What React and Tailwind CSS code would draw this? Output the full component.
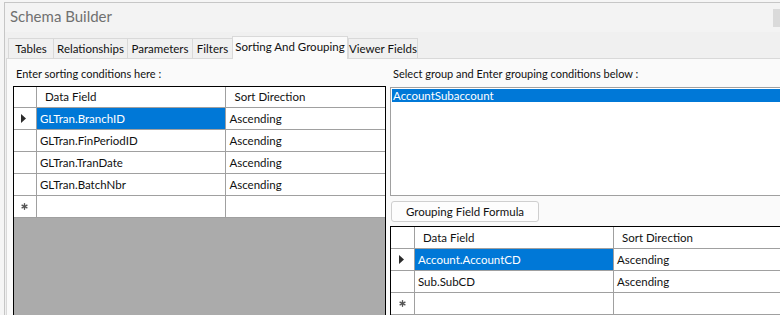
import React from 'react';

const tabs = [
  { label: 'Tables', w: 'w-[45px]' },
  { label: 'Relationships', w: 'w-[74px]' },
  { label: 'Parameters', w: 'w-[65px]' },
  { label: 'Filters', w: 'w-[40px]' },
  { label: 'Sorting And Grouping', w: 'w-[116px]', active: true },
  { label: 'Viewer Fields', w: 'w-[70px]' },
];

const sortRows = [
  { field: 'GLTran.BranchID', dir: 'Ascending', selected: true },
  { field: 'GLTran.FinPeriodID', dir: 'Ascending' },
  { field: 'GLTran.TranDate', dir: 'Ascending' },
  { field: 'GLTran.BatchNbr', dir: 'Ascending' },
];

const groupRows = [
  { field: 'Account.AccountCD', dir: 'Ascending', selected: true },
  { field: 'Sub.SubCD', dir: 'Ascending' },
];

const RowArrow = () => (
  <svg width="5" height="9" viewBox="0 0 5 9">
    <polygon points="0,0 5,4.5 0,9" fill="#2b2b2b" />
  </svg>
);

const NewRowMark = () => (
  <svg width="7" height="7" viewBox="0 0 7 7">
    <g stroke="#555" strokeWidth="1.4" strokeLinecap="round">
      <line x1="3.5" y1="0.8" x2="3.5" y2="6.2" />
      <line x1="1" y1="2.2" x2="6" y2="4.8" />
      <line x1="1" y1="4.8" x2="6" y2="2.2" />
    </g>
  </svg>
);

// one data grid: row header column + Data Field + Sort Direction
const DataGrid = ({ rows, hdrW, fieldW, dirW, headerH, className }) => (
  <div className={`flex flex-col bg-[#ababab] border-t border-l border-black ${className}`}>
    <div className={`flex ${headerH} bg-white border-b border-[#a0a0a0] shrink-0`}>
      <div className={`${hdrW} border-r border-[#a0a0a0]`} />
      <div className={`${fieldW} border-r border-[#a0a0a0] pl-[8px] flex items-center`}>Data Field</div>
      <div className={`${dirW} pl-[8px] flex items-center`}>Sort Direction</div>
    </div>
    {rows.map((r) => (
      <div key={r.field} className="flex h-[22px] bg-white border-b border-[#a0a0a0] shrink-0">
        <div className={`${hdrW} border-r border-[#a0a0a0] flex items-center justify-center pr-[2px]`}>
          {r.selected && <RowArrow />}
        </div>
        <div
          className={`${fieldW} border-r border-[#a0a0a0] pl-[3px] flex items-center ${
            r.selected ? 'bg-[#0078d7] text-white' : ''
          }`}
        >
          {r.field}
        </div>
        <div className={`${dirW} pl-[3px] flex items-center`}>{r.dir}</div>
      </div>
    ))}
    <div className="flex h-[22px] bg-white border-b border-[#a0a0a0] shrink-0">
      <div className={`${hdrW} border-r border-[#a0a0a0] flex items-center justify-center pr-[1px]`}>
        <NewRowMark />
      </div>
      <div className={`${fieldW} border-r border-[#a0a0a0]`} />
      <div className={`${dirW}`} />
    </div>
  </div>
);

export default function App() {
  return (
    <div className="w-[780px] h-[315px] overflow-hidden bg-[#f5f5f5] pl-[4px] pt-[2px] font-['Segoe_UI',Lato,sans-serif] text-[11.5px] text-[#111] whitespace-nowrap">
      <div className="h-full flex flex-col border-l border-t border-[#c6c6c6] bg-[#f0f0f0]">
        {/* title bar */}
        <div className="h-[29px] flex justify-between bg-[#f3f3f3] shrink-0">
          <div className="pl-[5px] pt-[3px] leading-[20px] text-[15px] text-[#707070]">Schema Builder</div>
          <div className="w-[7px] h-[18px] mt-[6px] bg-[#dadada]" />
        </div>

        {/* tabs */}
        <div className="h-[26px] flex items-end pl-[3px] shrink-0">
          {tabs.map((t) =>
            t.active ? (
              <div
                key={t.label}
                className={`${t.w} h-[23px] -mb-[1px] relative z-10 flex items-center justify-center pb-[3px] bg-[#fafafa] border-t border-l border-r border-[#d9d9d9]`}
              >
                {t.label}
              </div>
            ) : (
              <div
                key={t.label}
                className={`${t.w} h-[20px] flex items-center justify-center bg-[#f0f0f0] border-t border-l border-[#d9d9d9] last:border-r`}
              >
                {t.label}
              </div>
            )
          )}
        </div>

        {/* tab page */}
        <div className="flex-1 min-h-0 ml-[1px] flex bg-[#fafafa] border-t border-l border-[#d9d9d9]">
          {/* sorting side */}
          <div className="w-[383px] flex flex-col pt-[7px]">
            <div className="pl-[9px] leading-[16px] h-[16px] text-[11px]">Enter sorting conditions here :</div>
            <DataGrid
              rows={sortRows}
              hdrW="w-[23px]"
              fieldW="w-[190px]"
              dirW="w-[159px]"
              headerH="h-[21px]"
              className="mt-[4px] ml-[6px] w-[373px] flex-1 border-r"
            />
          </div>

          {/* grouping side */}
          <div className="flex-1 flex flex-col pt-[7px]">
            <div className="pl-[3px] leading-[16px] h-[16px] text-[11px]">Select group and Enter grouping conditions below :</div>
            <div className="mt-[5px] h-[111px] bg-white border-t border-l border-b border-[#a0a0a0] pt-[1px] pl-[1px]">
              <div className="h-[13px] leading-[13px] pl-[1px] bg-[#0078d7] text-white">AccountSubaccount</div>
            </div>
            <div className="mt-[5px] ml-[1px] w-[148px] h-[21px] flex items-center justify-center rounded-[3px] border border-[#cfcfcf] bg-[#fdfdfd]">
              Grouping Field Formula
            </div>
            <DataGrid
              rows={groupRows}
              hdrW="w-[24px]"
              fieldW="w-[199px]"
              dirW="flex-1"
              headerH="h-[22px]"
              className="mt-[4px] flex-1"
            />
          </div>
        </div>
      </div>
    </div>
  );
}
